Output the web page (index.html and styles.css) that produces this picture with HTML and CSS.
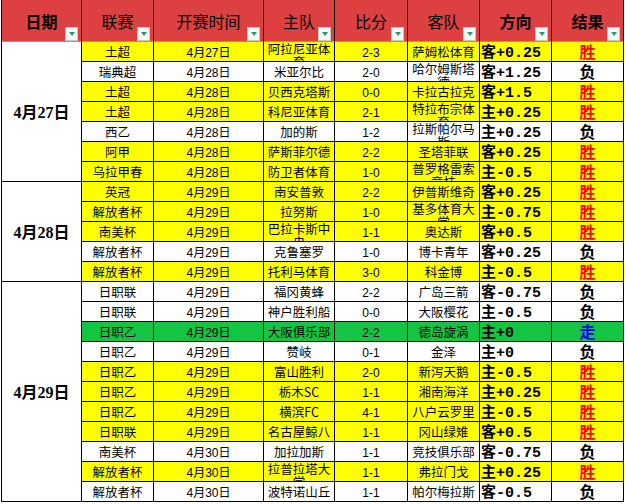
FILE: index.html
```html
<!DOCTYPE html>
<html lang="zh-CN">
<head>
<meta charset="utf-8">
<title>赛果</title>
<link rel="stylesheet" href="styles.css">
</head>
<body>
<div class="sheet">
  <div class="c h b">日期<span class="fb"></span></div>
  <div class="c h">联赛<span class="fb"></span></div>
  <div class="c h">开赛时间<span class="fb"></span></div>
  <div class="c h">主队<span class="fb"></span></div>
  <div class="c h">比分<span class="fb"></span></div>
  <div class="c h">客队<span class="fb"></span></div>
  <div class="c h b">方向<span class="fb"></span></div>
  <div class="c h b">结果<span class="fb"></span></div>

  <div class="c d s7">4月27日</div>
  <div class="row y"><div class="c">土超</div><div class="c t">4月27日</div><div class="c wrap">阿拉尼亚体育</div><div class="c sc">2-3</div><div class="c">萨姆松体育</div><div class="c dir">客+0.25</div><div class="c res win">胜</div></div>
  <div class="row w"><div class="c">瑞典超</div><div class="c t">4月28日</div><div class="c">米亚尔比</div><div class="c sc">2-0</div><div class="c wrap">哈尔姆斯塔德</div><div class="c dir">客+1.25</div><div class="c res">负</div></div>
  <div class="row y"><div class="c">土超</div><div class="c t">4月28日</div><div class="c">贝西克塔斯</div><div class="c sc">0-0</div><div class="c">卡拉古拉克</div><div class="c dir">客+1.5</div><div class="c res win">胜</div></div>
  <div class="row y"><div class="c">土超</div><div class="c t">4月28日</div><div class="c">科尼亚体育</div><div class="c sc">2-1</div><div class="c wrap">特拉布宗体育</div><div class="c dir">主+0.25</div><div class="c res win">胜</div></div>
  <div class="row w"><div class="c">西乙</div><div class="c t">4月28日</div><div class="c">加的斯</div><div class="c sc">1-2</div><div class="c wrap">拉斯帕尔马斯</div><div class="c dir">主+0.25</div><div class="c res">负</div></div>
  <div class="row y"><div class="c">阿甲</div><div class="c t">4月28日</div><div class="c">萨斯菲尔德</div><div class="c sc">2-2</div><div class="c">圣塔菲联</div><div class="c dir">客+0.25</div><div class="c res win">胜</div></div>
  <div class="row y"><div class="c">乌拉甲春</div><div class="c t">4月28日</div><div class="c">防卫者体育</div><div class="c sc">1-0</div><div class="c wrap">普罗格雷索竞技</div><div class="c dir">主-0.5</div><div class="c res win">胜</div></div>

  <div class="c d s5">4月28日</div>
  <div class="row y"><div class="c">英冠</div><div class="c t">4月29日</div><div class="c">南安普敦</div><div class="c sc">2-2</div><div class="c">伊普斯维奇</div><div class="c dir">客+0.25</div><div class="c res win">胜</div></div>
  <div class="row y"><div class="c">解放者杯</div><div class="c t">4月29日</div><div class="c">拉努斯</div><div class="c sc">1-0</div><div class="c wrap">基多体育大学</div><div class="c dir">主-0.75</div><div class="c res win">胜</div></div>
  <div class="row y"><div class="c">南美杯</div><div class="c t">4月29日</div><div class="c wrap">巴拉卡斯中央</div><div class="c sc">1-1</div><div class="c">奥达斯</div><div class="c dir">客+0.5</div><div class="c res win">胜</div></div>
  <div class="row w"><div class="c">解放者杯</div><div class="c t">4月29日</div><div class="c">克鲁塞罗</div><div class="c sc">1-0</div><div class="c">博卡青年</div><div class="c dir">客+0.25</div><div class="c res">负</div></div>
  <div class="row y"><div class="c">解放者杯</div><div class="c t">4月29日</div><div class="c">托利马体育</div><div class="c sc">3-0</div><div class="c">科金博</div><div class="c dir">主-0.5</div><div class="c res win">胜</div></div>

  <div class="c d s11">4月29日</div>
  <div class="row w"><div class="c">日职联</div><div class="c t">4月29日</div><div class="c">福冈黄蜂</div><div class="c sc">2-2</div><div class="c">广岛三箭</div><div class="c dir">客-0.75</div><div class="c res">负</div></div>
  <div class="row w"><div class="c">日职联</div><div class="c t">4月29日</div><div class="c">神户胜利船</div><div class="c sc">0-0</div><div class="c">大阪樱花</div><div class="c dir">主-0.5</div><div class="c res">负</div></div>
  <div class="row g"><div class="c">日职乙</div><div class="c t">4月29日</div><div class="c">大阪俱乐部</div><div class="c sc">2-2</div><div class="c">德岛旋涡</div><div class="c dir">主+0</div><div class="c res draw">走</div></div>
  <div class="row w"><div class="c">日职乙</div><div class="c t">4月29日</div><div class="c">赞岐</div><div class="c sc">0-1</div><div class="c">金泽</div><div class="c dir">主+0</div><div class="c res">负</div></div>
  <div class="row y"><div class="c">日职乙</div><div class="c t">4月29日</div><div class="c">富山胜利</div><div class="c sc">2-0</div><div class="c">新泻天鹅</div><div class="c dir">主-0.5</div><div class="c res win">胜</div></div>
  <div class="row y"><div class="c">日职乙</div><div class="c t">4月29日</div><div class="c">栃木SC</div><div class="c sc">1-1</div><div class="c">湘南海洋</div><div class="c dir">主+0.25</div><div class="c res win">胜</div></div>
  <div class="row y"><div class="c">日职乙</div><div class="c t">4月29日</div><div class="c">横滨FC</div><div class="c sc">4-1</div><div class="c">八户云罗里</div><div class="c dir">主-0.5</div><div class="c res win">胜</div></div>
  <div class="row y"><div class="c">日职联</div><div class="c t">4月29日</div><div class="c">名古屋鲸八</div><div class="c sc">1-1</div><div class="c">冈山绿雉</div><div class="c dir">客+0.5</div><div class="c res win">胜</div></div>
  <div class="row w"><div class="c">南美杯</div><div class="c t">4月30日</div><div class="c">加拉加斯</div><div class="c sc">1-1</div><div class="c">竞技俱乐部</div><div class="c dir">客-0.75</div><div class="c res">负</div></div>
  <div class="row y"><div class="c">解放者杯</div><div class="c t">4月30日</div><div class="c wrap">拉普拉塔大学</div><div class="c sc">1-1</div><div class="c">弗拉门戈</div><div class="c dir">主+0.25</div><div class="c res win">胜</div></div>
  <div class="row w"><div class="c">解放者杯</div><div class="c t">4月30日</div><div class="c">波特诺山丘</div><div class="c sc">1-1</div><div class="c">帕尔梅拉斯</div><div class="c dir">客-0.5</div><div class="c res">负</div></div>
</div>
</body>
</html>
```

FILE: styles.css
```css
html, body {
  margin: 0;
  padding: 0;
  background: #ffffff;
}

.sheet {
  display: grid;
  grid-template-columns: 80px 72px 110px 71px 73px 72px 72px 72px;
  grid-template-rows: 42px repeat(23, 20px);
  width: max-content;
  margin-left: 1px;
  border-left: 1px solid #000;
  font-family: "Noto Sans CJK SC", sans-serif;
  color: #000;
}

.row {
  display: contents;
}

.c {
  box-sizing: border-box;
  border-right: 1px solid #000;
  border-bottom: 1px solid #000;
  display: flex;
  align-items: center;
  justify-content: center;
  overflow: hidden;
  white-space: nowrap;
  font-size: 12.5px;
  line-height: 14px;
  padding-top: 1px;
}

.y > .c { background: #ffff00; }
.w > .c { background: #ffffff; }
.g > .c { background: #14c443; }

.h {
  position: relative;
  background: #dc4040;
  border-bottom-color: #4fb8a8;
  font-size: 16px;
  line-height: 18px;
  padding-top: 1px;
}

.b {
  font-weight: bold;
}

.fb {
  position: absolute;
  right: 3px;
  bottom: 0;
  width: 13px;
  height: 14px;
  box-sizing: border-box;
  border: 1px solid #c8c8c8;
  background: #f6f6f6;
  display: flex;
  align-items: center;
  justify-content: center;
}

.fb::after {
  content: "";
  width: 0;
  height: 0;
  border-left: 3.5px solid transparent;
  border-right: 3.5px solid transparent;
  border-top: 4px solid #1f9d6b;
}

.d {
  grid-column: 1;
  background: #ffffff;
  font-family: "Liberation Serif", "Noto Sans CJK SC", serif;
  font-weight: bold;
  font-size: 16px;
  line-height: 18px;
  padding-top: 2px;
}

.s7 { grid-row: span 7; }
.s5 { grid-row: span 5; }
.s11 { grid-row: span 11; }

.t {
  font-family: "Liberation Sans", "Noto Sans CJK SC", sans-serif;
  font-size: 12px;
  padding-top: 2px;
}

.sc {
  font-family: "Liberation Sans", sans-serif;
  font-size: 12px;
  padding-top: 2px;
}

.wrap {
  white-space: normal;
  word-break: break-all;
  align-items: flex-start;
  text-align: center;
  line-height: 13px;
  padding-top: 0;
}

.dir {
  justify-content: flex-start;
  padding-left: 1px;
  padding-top: 5px;
  font-family: "Liberation Mono", "Noto Sans CJK SC", monospace;
  font-weight: bold;
  font-size: 15px;
  line-height: 14px;
}

.res {
  font-weight: bold;
  font-size: 16px;
  line-height: 16px;
  padding-top: 0;
  padding-bottom: 2px;
}

.win { color: #ff0000; }
.draw { color: #0000ff; }
```
